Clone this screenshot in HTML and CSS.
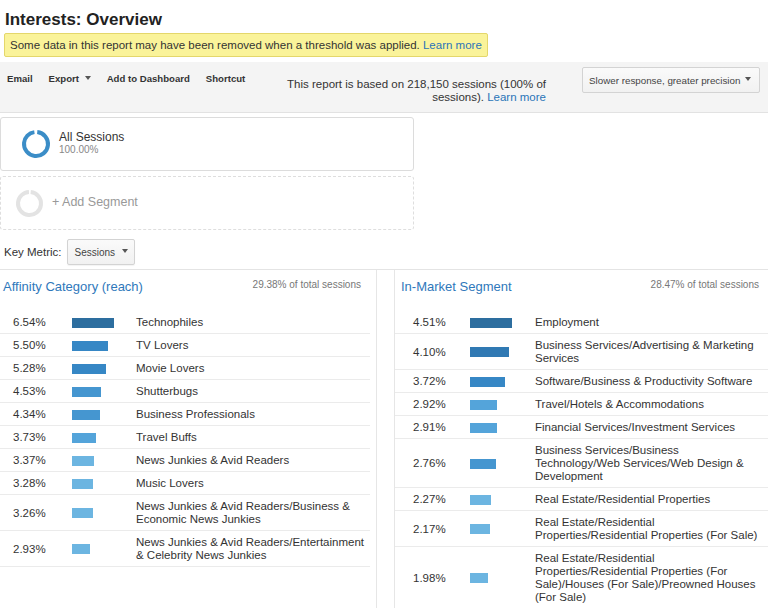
FILE: index.html
```html
<!DOCTYPE html>
<html>
<head>
<meta charset="utf-8">
<link rel="stylesheet" href="styles.css">
</head>
<body>
<h1 class="title">Interests: Overview</h1>
<div class="notice">Some data in this report may have been removed when a threshold was applied. <a class="link">Learn more</a></div>

<div class="toolbar">
  <div class="tools">
    <span class="tool">Email</span>
    <span class="tool">Export <span class="caret"></span></span>
    <span class="tool">Add to Dashboard</span>
    <span class="tool">Shortcut</span>
  </div>
  <div class="based">This report is based on 218,150 sessions (100% of<br>sessions). <a class="link">Learn more</a></div>
  <div class="select precision">Slower response, greater precision <span class="caret"></span></div>
</div>

<div class="segments">
  <div class="segment">
    <svg class="donut" width="30" height="30" viewBox="0 0 30 30"><circle cx="15" cy="15" r="12" fill="none" stroke="#3b8dc7" stroke-width="4" stroke-dasharray="72 3.4" transform="rotate(-84 15 15)"/></svg>
    <div class="seg-text">
      <div class="seg-name">All Sessions</div>
      <div class="seg-pct">100.00%</div>
    </div>
  </div>
  <div class="segment add">
    <svg class="donut gray" width="29" height="29" viewBox="0 0 29 29"><circle cx="14.5" cy="14.5" r="11.5" fill="none" stroke="#e3e3e3" stroke-width="4" stroke-dasharray="70 2.3" transform="rotate(-84 14.5 14.5)"/></svg>
    <div class="add-text">+ Add Segment</div>
  </div>
</div>

<div class="keymetric">
  <span class="km-label">Key Metric:</span>
  <div class="select km-select">Sessions <span class="caret"></span></div>
</div>

<div class="panels">
  <div class="panel left">
    <div class="panel-head">
      <span class="panel-title">Affinity Category (reach)</span>
      <span class="panel-note">29.38% of total sessions</span>
    </div>
    <div class="rows">
      <div class="row"><span class="pct">6.54%</span><span class="barcell"><span class="bar c1" style="width:42px"></span></span><span class="label">Technophiles</span></div>
      <div class="row"><span class="pct">5.50%</span><span class="barcell"><span class="bar c2" style="width:36px"></span></span><span class="label">TV Lovers</span></div>
      <div class="row"><span class="pct">5.28%</span><span class="barcell"><span class="bar c2" style="width:34px"></span></span><span class="label">Movie Lovers</span></div>
      <div class="row"><span class="pct">4.53%</span><span class="barcell"><span class="bar c3" style="width:29px"></span></span><span class="label">Shutterbugs</span></div>
      <div class="row"><span class="pct">4.34%</span><span class="barcell"><span class="bar c3" style="width:28px"></span></span><span class="label">Business Professionals</span></div>
      <div class="row"><span class="pct">3.73%</span><span class="barcell"><span class="bar c4" style="width:24px"></span></span><span class="label">Travel Buffs</span></div>
      <div class="row"><span class="pct">3.37%</span><span class="barcell"><span class="bar c5" style="width:22px"></span></span><span class="label">News Junkies &amp; Avid Readers</span></div>
      <div class="row"><span class="pct">3.28%</span><span class="barcell"><span class="bar c5" style="width:21px"></span></span><span class="label">Music Lovers</span></div>
      <div class="row"><span class="pct">3.26%</span><span class="barcell"><span class="bar c5" style="width:21px"></span></span><span class="label">News Junkies &amp; Avid Readers/Business &amp; Economic News Junkies</span></div>
      <div class="row"><span class="pct">2.93%</span><span class="barcell"><span class="bar c5" style="width:18px"></span></span><span class="label">News Junkies &amp; Avid Readers/Entertainment &amp; Celebrity News Junkies</span></div>
    </div>
  </div>
  <div class="panel right">
    <div class="panel-head">
      <span class="panel-title">In-Market Segment</span>
      <span class="panel-note">28.47% of total sessions</span>
    </div>
    <div class="rows">
      <div class="row"><span class="pct">4.51%</span><span class="barcell"><span class="bar c1" style="width:42px"></span></span><span class="label">Employment</span></div>
      <div class="row"><span class="pct">4.10%</span><span class="barcell"><span class="bar c1b" style="width:39px"></span></span><span class="label">Business Services/Advertising &amp; Marketing Services</span></div>
      <div class="row"><span class="pct">3.72%</span><span class="barcell"><span class="bar c2" style="width:35px"></span></span><span class="label">Software/Business &amp; Productivity Software</span></div>
      <div class="row"><span class="pct">2.92%</span><span class="barcell"><span class="bar c4" style="width:27px"></span></span><span class="label">Travel/Hotels &amp; Accommodations</span></div>
      <div class="row"><span class="pct">2.91%</span><span class="barcell"><span class="bar c4" style="width:27px"></span></span><span class="label">Financial Services/Investment Services</span></div>
      <div class="row"><span class="pct">2.76%</span><span class="barcell"><span class="bar c3" style="width:26px"></span></span><span class="label">Business Services/Business Technology/Web Services/Web Design &amp; Development</span></div>
      <div class="row"><span class="pct">2.27%</span><span class="barcell"><span class="bar c5" style="width:21px"></span></span><span class="label">Real Estate/Residential Properties</span></div>
      <div class="row"><span class="pct">2.17%</span><span class="barcell"><span class="bar c5" style="width:20px"></span></span><span class="label">Real Estate/Residential Properties/Residential Properties (For Sale)</span></div>
      <div class="row"><span class="pct">1.98%</span><span class="barcell"><span class="bar c5" style="width:18px"></span></span><span class="label">Real Estate/Residential Properties/Residential Properties (For Sale)/Houses (For Sale)/Preowned Houses (For Sale)</span></div>
    </div>
  </div>
</div>
</body>
</html>
```

FILE: styles.css
```css
html, body {
  margin: 0;
  padding: 0;
  background: #fff;
}
body {
  font-family: "Liberation Sans", Arial, sans-serif;
  color: #333;
  width: 768px;
  overflow: hidden;
}
.title {
  margin: 0;
  padding: 10px 5px 0;
  font-size: 17px;
  line-height: 20px;
  font-weight: bold;
  color: #222;
}
.notice {
  display: inline-block;
  margin: 3px 0 0 4px;
  padding: 4px 5px;
  font-size: 11.5px;
  line-height: 14px;
  white-space: nowrap;
  background: #faf39a;
  border: 1px solid #e4d76b;
  border-radius: 2px;
  color: #333;
}
.link {
  color: #2a74b8;
}
.toolbar {
  margin-top: 5px;
  height: 50px;
  background: #f4f4f4;
  border-bottom: 1px solid #e2e2e2;
  display: flex;
  align-items: flex-start;
}
.tools {
  display: flex;
  padding: 11px 0 0 7px;
}
.tool {
  font-size: 9.6px;
  font-weight: bold;
  color: #333;
  line-height: 12px;
  margin-right: 16px;
}
.caret {
  display: inline-block;
  width: 0;
  height: 0;
  border-left: 3.5px solid transparent;
  border-right: 3.5px solid transparent;
  border-top: 4px solid #555;
  vertical-align: middle;
  margin-left: 3px;
  position: relative;
  top: -1px;
}
.based {
  margin-left: auto;
  padding-top: 16px;
  text-align: right;
  font-size: 11.5px;
  line-height: 13px;
  white-space: nowrap;
}
.select {
  border: 1px solid #d3d3d3;
  border-radius: 2px;
  background: linear-gradient(#fafafa, #f1f1f1);
  font-size: 10px;
  color: #444;
  display: flex;
  align-items: center;
  box-sizing: border-box;
  white-space: nowrap;
}
.precision {
  margin: 5px 8px 0 36px;
  height: 26px;
  width: 178px;
  padding: 0 8px 0 6px;
  font-size: 9.8px;
  justify-content: space-between;
}
.segments {
  padding-top: 4px;
}
.segment {
  width: 414px;
  height: 54px;
  box-sizing: border-box;
  border: 1px solid #dcdcdc;
  border-radius: 3px;
  display: flex;
  align-items: center;
}
.donut {
  margin-left: 20px;
  flex: none;
}
.donut.gray {
  margin-left: 14px;
}
.seg-text {
  margin-left: 8px;
  margin-top: -2px;
}
.seg-name {
  font-size: 12px;
  line-height: 14px;
}
.seg-pct {
  font-size: 10px;
  line-height: 12px;
  color: #888;
}
.segment.add {
  margin-top: 5px;
  border: 1px dashed #dedede;
}
.add-text {
  margin-left: 8px;
  margin-top: -3px;
  font-size: 12.5px;
  color: #999;
}
.keymetric {
  display: flex;
  align-items: center;
  padding: 9px 0 4px 4px;
  border-bottom: 1px solid #e4e4e4;
}
.km-label {
  font-size: 11.5px;
}
.km-select {
  margin-left: 5px;
  width: 68px;
  height: 26px;
  padding: 0 6px 0 7px;
  justify-content: space-between;
  box-shadow: 0 1px 1px rgba(0,0,0,0.05);
}
.panels {
  display: flex;
  align-items: stretch;
  min-height: 340px;
}
.panel.left {
  width: 377px;
  box-sizing: border-box;
  border-right: 1px solid #e6e6e6;
  padding-right: 6px;
}
.panel.right {
  margin-left: 17px;
  flex: 1;
  border-left: 1px solid #e6e6e6;
}
.panel-head {
  height: 41px;
  display: flex;
  justify-content: space-between;
  align-items: flex-start;
  padding-top: 9px;
  box-sizing: border-box;
}
.left .panel-head {
  padding-left: 3px;
  padding-right: 9px;
}
.right .panel-head {
  padding-left: 6px;
  padding-right: 9px;
}
.panel-title {
  font-size: 13px;
  line-height: 16px;
  color: #2f78bb;
}
.panel-note {
  font-size: 10px;
  line-height: 12px;
  color: #777;
}
.row {
  display: grid;
  align-items: center;
  padding: 5px 0 4px;
  border-bottom: 1px solid #ebebeb;
  font-size: 11.5px;
  line-height: 13px;
}
.left .row {
  grid-template-columns: 59px 64px 1fr;
  padding-left: 13px;
}
.right .row {
  grid-template-columns: 57px 65px 1fr;
  padding-left: 18px;
  padding-right: 9px;
}
.right .row:last-child {
  border-bottom: none;
}
.barcell {
  display: flex;
  align-items: center;
}
.bar {
  display: block;
  height: 10px;
}
.c1 { background: #2d6e9f; }
.c1b { background: #3079b3; }
.c2 { background: #3687c5; }
.c3 { background: #4596d0; }
.c4 { background: #54a4da; }
.c5 { background: #6cb5e1; }
.label {
  color: #333;
}
```
